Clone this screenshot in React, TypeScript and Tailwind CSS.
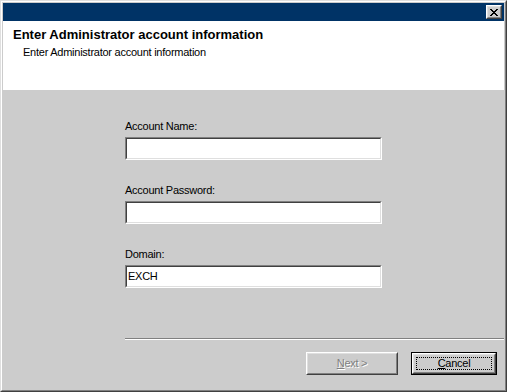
const font = { fontFamily: '"Liberation Sans", Arial, sans-serif' }

function Field({ label, value }: { label: string; value?: string }) {
  return (
    <div className="flex flex-col">
      <div className="text-[11px] leading-[13px] tracking-[-0.25px] text-black mb-[4px]">{label}</div>
      <div className="w-[257px] h-[23px] border border-t-[#808080] border-l-[#808080] border-r-white border-b-white">
        <div className="h-full border border-t-[#404040] border-l-[#404040] border-r-[#dfdfdf] border-b-[#dfdfdf] bg-white px-[1px] text-[11px] leading-[19px] tracking-[-0.25px] text-black">
          {value}
        </div>
      </div>
    </div>
  )
}

export default function App() {
  return (
    <div className="w-[507px] h-[392px] border border-t-[#dfdfdf] border-l-[#dfdfdf] border-r-[#404040] border-b-[#404040]" style={font}>
      <div className="h-full flex flex-col p-px bg-[#cccccc] border border-t-white border-l-white border-r-[#808080] border-b-[#808080]">
        {/* title bar */}
        <div className="h-[18px] bg-[#003366] flex justify-end items-start pt-[2px] pr-[2px]">
          <div className="w-[16px] h-[14px] border border-t-white border-l-white border-r-[#404040] border-b-[#404040]">
            <div className="h-full flex items-center justify-center bg-[#cccccc] border border-t-[#dfdfdf] border-l-[#dfdfdf] border-r-[#808080] border-b-[#808080]">
              <svg width="8" height="7" viewBox="0 0 8 7" shapeRendering="crispEdges">
                <path d="M0 0h2v1h-2zM6 0h2v1h-2zM1 1h2v1h-2zM5 1h2v1h-2zM2 2h4v1h-4zM3 3h2v1h-2zM2 4h4v1h-4zM1 5h2v1h-2zM5 5h2v1h-2zM0 6h2v1h-2zM6 6h2v1h-2z" fill="#000" />
              </svg>
            </div>
          </div>
        </div>

        {/* header */}
        <div className="h-[69px] bg-white pt-[6px] pl-[10px]">
          <div className="text-[13px] leading-[15px] font-bold text-black">Enter Administrator account information</div>
          <div className="mt-[4px] pl-[10px] text-[11px] leading-[13px] tracking-[-0.25px] text-black">Enter Administrator account information</div>
        </div>

        {/* body */}
        <div className="flex-1 flex flex-col">
          <div className="pt-[30px] pl-[122px] flex flex-col gap-[24px]">
            <Field label="Account Name:" />
            <Field label="Account Password:" />
            <Field label="Domain:" value="EXCH" />
          </div>
          <div className="flex-1" />
          <div className="ml-[122px] border-t border-t-[#808080] border-b border-b-white" />
          <div className="mt-[12px] mb-[14px] pr-[7px] flex justify-end gap-[13px]">
            <div className="w-[92px] h-[23px] border border-t-white border-l-white border-r-[#404040] border-b-[#404040]">
              <div className="h-full flex items-center justify-center border border-t-[#dfdfdf] border-l-[#dfdfdf] border-r-[#808080] border-b-[#808080] text-[11px] tracking-[-0.25px] text-[#808080] [text-shadow:1px_1px_0_#ffffff]">
                <span><span className="underline">N</span>ext &gt;</span>
              </div>
            </div>
            <div className="w-[86px] h-[23px] border border-black">
              <div className="h-full border border-t-white border-l-white border-r-[#404040] border-b-[#404040]">
                <div className="h-full p-[2px] border border-t-[#dfdfdf] border-l-[#dfdfdf] border-r-[#808080] border-b-[#808080]">
                  <div className="h-full flex items-center justify-center border border-dotted border-black text-[11px] tracking-[-0.25px] text-black">
                    <span><span className="underline">C</span>ancel</span>
                  </div>
                </div>
              </div>
            </div>
          </div>
        </div>
      </div>
    </div>
  )
}
